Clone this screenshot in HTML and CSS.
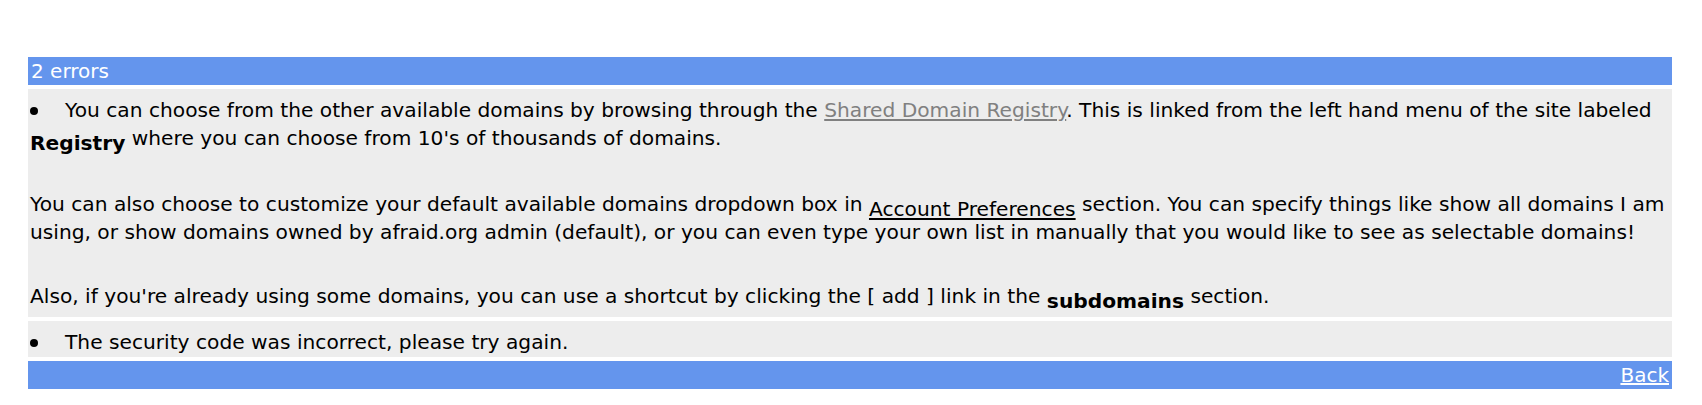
FILE: index.html
```html
<!DOCTYPE html>
<html lang="en">
<head>
<meta charset="utf-8">
<title>2 errors</title>
<link rel="stylesheet" href="styles.css">
</head>
<body>
<div class="errors">
  <div class="bar bar-head">2 errors</div>
  <div class="item item-first">
    <p class="para"><span class="dot"></span>You can choose from the other available domains by browsing through the <a class="link-gray" href="#">Shared Domain Registry</a>. This is linked from the left hand menu of the site labeled <b class="low">Registry</b> where you can choose from 10's of thousands of domains.</p>
    <p class="para para-2">You can also choose to customize your default available domains dropdown box in <a class="link-black low" href="#">Account Preferences</a> section. You can specify things like show all domains I am using, or show domains owned by afraid.org admin (default), or you can even type your own list in manually that you would like to see as selectable domains!</p>
    <p class="para para-3">Also, if you're already using some domains, you can use a shortcut by clicking the [ add ] link in the <b class="low">subdomains</b> section.</p>
  </div>
  <div class="item item-last">
    <p class="para"><span class="dot"></span>The security code was incorrect, please try again.</p>
  </div>
  <div class="bar bar-foot"><a class="link-white" href="#">Back</a></div>
</div>
</body>
</html>
```

FILE: styles.css
```css
html, body {
  margin: 0;
  padding: 0;
  background: #ffffff;
}

body {
  font-family: Verdana, "DejaVu Sans", sans-serif;
  font-size: 20px;
  color: #000000;
}

.errors {
  display: flex;
  flex-direction: column;
  gap: 4px;
  width: 1644px;
  margin: 57px 0 0 28px;
}

.bar {
  background: #6495ed;
  color: #ffffff;
  height: 28px;
  line-height: 28px;
  padding: 0 3px;
  box-sizing: border-box;
}

.bar-head {
  padding-top: 1px;
  line-height: 27px;
}

.bar-foot {
  text-align: right;
}

.item {
  background: #ededed;
  padding: 7px 2px 1px;
  line-height: 28px;
  font-size: 20.2px;
}

.item-first {
  padding-bottom: 7px;
}

.para {
  margin: 0;
}

.para-2 {
  margin-top: 38px;
}

.para-3 {
  margin-top: 36px;
}

.dot {
  display: inline-block;
  width: 8px;
  height: 8px;
  border-radius: 50%;
  background: #000000;
  margin-right: 27px;
  vertical-align: 2px;
}

.low {
  vertical-align: -5px;
  line-height: 16px;
}

.link-gray {
  color: #808080;
  text-decoration: underline;
}

.link-black {
  color: #000000;
  text-decoration: underline;
}

.link-white {
  color: #ffffff;
  text-decoration: underline;
}
```
